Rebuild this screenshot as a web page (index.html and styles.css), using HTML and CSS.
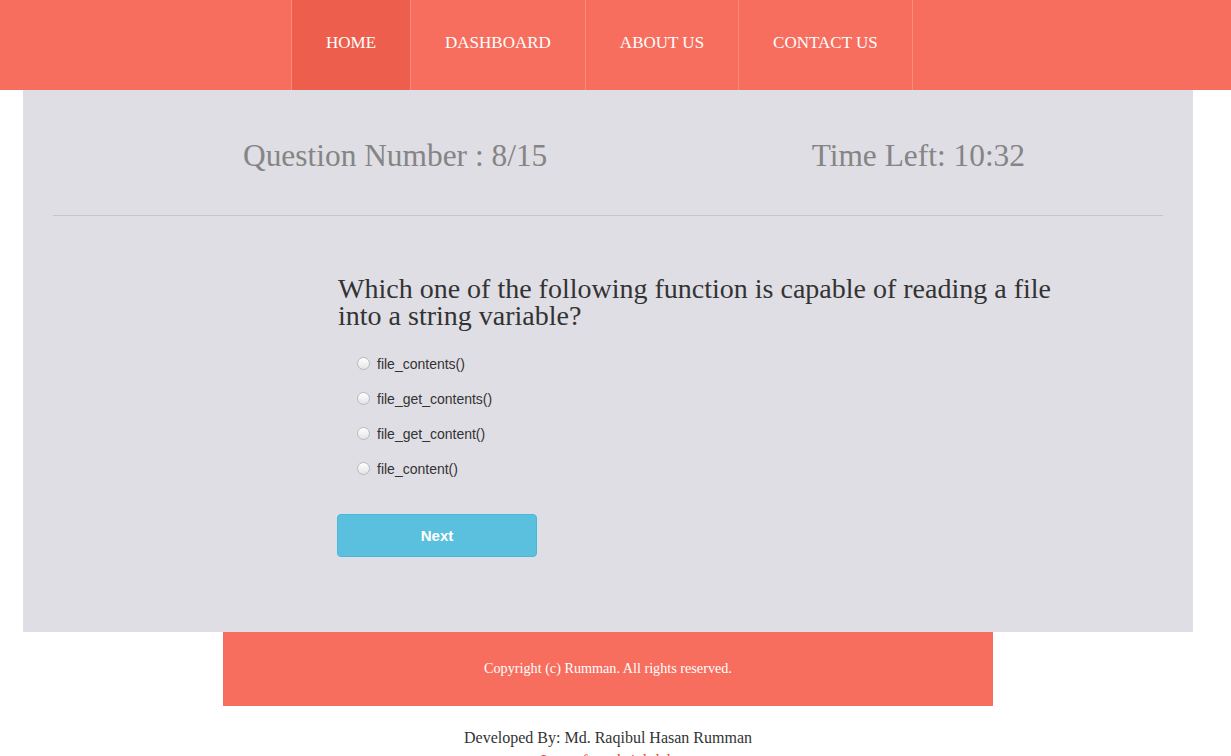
FILE: index.html
```html
<!DOCTYPE html>
<html>
<head>
<meta charset="utf-8">
<title>Quiz</title>
<link rel="stylesheet" href="styles.css">
</head>
<body>
<nav class="topnav">
  <ul class="menu">
    <li class="menu-item active"><a href="#">HOME</a></li>
    <li class="menu-item"><a href="#">DASHBOARD</a></li>
    <li class="menu-item"><a href="#">ABOUT US</a></li>
    <li class="menu-item"><a href="#">CONTACT US</a></li>
  </ul>
</nav>
<div class="page">
  <main class="main">
    <div class="status">
      <h2 class="qnum">Question Number : 8/15</h2>
      <h2 class="timer">Time Left: 10:32</h2>
    </div>
    <hr class="divider">
    <section class="quiz">
      <h3 class="question">Which one of the following function is capable of reading a file into a string variable?</h3>
      <ul class="options">
        <li class="option"><span class="radio"></span><span class="label">file_contents()</span></li>
        <li class="option"><span class="radio"></span><span class="label">file_get_contents()</span></li>
        <li class="option"><span class="radio"></span><span class="label">file_get_content()</span></li>
        <li class="option"><span class="radio"></span><span class="label">file_content()</span></li>
      </ul>
      <button class="next">Next</button>
    </section>
  </main>
  <footer class="footer">
    <p>Copyright (c) Rumman. All rights reserved.</p>
  </footer>
  <div class="credit">
    <p class="dev">Developed By: Md. Raqibul Hasan Rumman</p>
    <p class="link">Learn from brightlab</p>
  </div>
</div>
</body>
</html>
```

FILE: styles.css
```css
html, body {
  margin: 0;
  padding: 0;
  background: #ffffff;
  font-family: "Liberation Serif", "Times New Roman", serif;
  overflow: hidden;
}

.topnav {
  background: #f76e5e;
  height: 90px;
}

.menu {
  list-style: none;
  margin: 0;
  padding: 0 0 0 291px;
  display: flex;
  height: 90px;
}

.menu-item {
  border-left: 1px solid #f98a7c;
  display: flex;
  align-items: center;
}

.menu-item:last-child {
  border-right: 1px solid #f98a7c;
}

.menu-item a {
  display: block;
  padding: 0 34px 5px 34px;
  color: #ffffff;
  text-decoration: none;
  font-size: 17px;
}

.menu-item.active {
  background: #ee5e4c;
}

.page {
  width: 1216px;
  display: flex;
  flex-direction: column;
  align-items: center;
}

.main {
  width: 1170px;
  background: #dfdee4;
  padding: 0 30px;
  box-sizing: border-box;
  height: 542px;
}

.status {
  display: flex;
  justify-content: space-between;
  padding: 48px 138px 0 190px;
}

.status h2 {
  margin: 0;
  font-weight: normal;
  font-size: 31.4px;
  line-height: 36px;
  color: #858585;
}

.divider {
  border: 0;
  border-top: 1px solid #c7c6cc;
  margin: 41px 0 0 0;
}

.quiz {
  padding: 59px 0 0 285px;
}

.question {
  margin: 0;
  width: 730px;
  font-weight: normal;
  font-size: 28px;
  line-height: 27px;
  color: #333333;
}

.options {
  list-style: none;
  margin: 17px 0 0 0;
  padding: 0 0 0 19px;
}

.option {
  display: flex;
  align-items: center;
  height: 35px;
  font-family: "Liberation Sans", Arial, sans-serif;
  font-size: 14px;
  color: #333333;
}

.radio {
  width: 11px;
  height: 11px;
  border-radius: 50%;
  border: 1px solid #b9b9bd;
  background: linear-gradient(#ffffff, #e4e4e8);
  margin-right: 7px;
}

.next {
  margin: 28px 0 0 -1px;
  width: 200px;
  height: 43px;
  background: #5bc0de;
  border: 1px solid #46b8da;
  border-radius: 4px;
  color: #ffffff;
  font-family: "Liberation Sans", Arial, sans-serif;
  font-weight: bold;
  font-size: 15px;
}

.footer {
  width: 770px;
  height: 74px;
  background: #f76e5e;
  display: flex;
  align-items: center;
  justify-content: center;
}

.footer p {
  margin: 0 0 2px 0;
  color: #ffffff;
  font-size: 14.2px;
}

.credit {
  text-align: center;
  padding-top: 23px;
}

.credit p {
  margin: 0;
}

.dev {
  font-size: 16px;
  color: #333333;
  line-height: 18px;
}

.link {
  margin-top: 5px !important;
  font-size: 16px;
  color: #f2443a;
  line-height: 18px;
}
```
